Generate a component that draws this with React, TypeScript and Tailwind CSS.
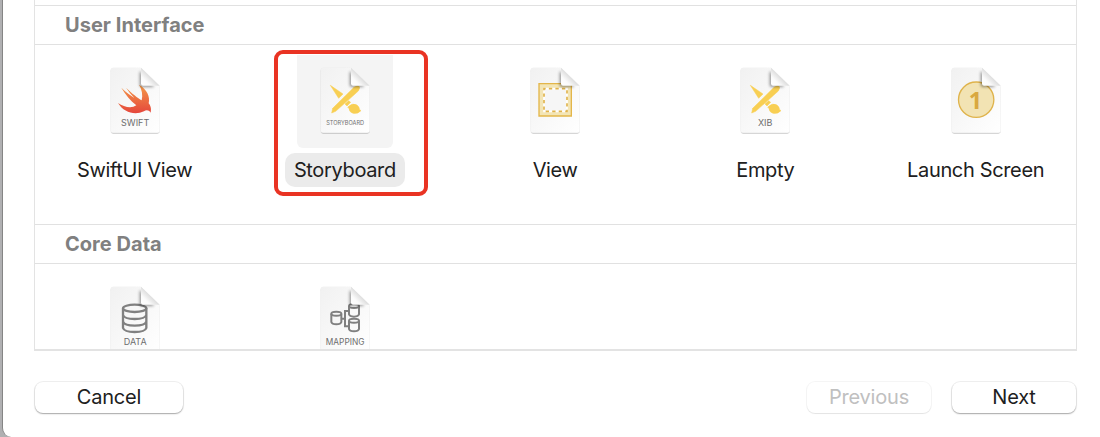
import type { ReactNode } from 'react';

function Doc({ id, label, size = 22, children }: { id: string; label?: string; size?: number; children: ReactNode }) {
  return (
    <svg viewBox="30 15 180 240" className="h-20 w-[60px] shrink-0">
      <defs>
        <linearGradient id={`${id}-page`} x1="0" y1="0" x2="1" y2="1">
          <stop offset="0" stopColor="#f1f1f1" />
          <stop offset="1" stopColor="#ffffff" />
        </linearGradient>
        <linearGradient id={`${id}-fold`} gradientUnits="userSpaceOnUse" x1="138" y1="92" x2="166" y2="64">
          <stop offset="0" stopColor="#ffffff" />
          <stop offset="0.5" stopColor="#fbfbfb" />
          <stop offset="1" stopColor="#dcdcdc" />
        </linearGradient>
        <filter id={`${id}-shadow`} x="-20%" y="-20%" width="140%" height="140%">
          <feDropShadow dx="0" dy="2" stdDeviation="2" floodColor="#000" floodOpacity="0.32" />
        </filter>
        <filter id={`${id}-soft`} x="-50%" y="-50%" width="200%" height="200%">
          <feGaussianBlur stdDeviation="4" />
        </filter>
        <clipPath id={`${id}-clip`}>
          <path d="M55 38H138L194 92V225Q194 233 186 233H55Q47 233 47 225V46Q47 38 55 38Z" />
        </clipPath>
      </defs>
      <path
        d="M55 38H138L194 92V225Q194 233 186 233H55Q47 233 47 225V46Q47 38 55 38Z"
        fill={`url(#${id}-page)`}
        filter={`url(#${id}-shadow)`}
      />
      {children}
      <g clipPath={`url(#${id}-clip)`}>
        <path d="M134 50V90Q134 96 140 96H178L138 50Z" fill="#000" opacity="0.4" filter={`url(#${id}-soft)`} />
      </g>
      <path d="M138 38L194 92H144Q138 92 138 86Z" fill={`url(#${id}-fold)`} />
      {label && (
        <text x="120.5" y={size < 18 ? 211 : 214} textAnchor="middle" fontSize={size} fill="#6e6e6e" fontFamily="Inter, sans-serif">
          {label}
        </text>
      )}
    </svg>
  );
}

function Tools() {
  return (
    <g fill="#f8cf53" stroke="#f8cf53" strokeWidth="1.5" strokeLinejoin="round">
      <path d="M76 91L114 117L101 130Z" />
      <path d="M147 97L156 92Q164 92 164 99L160 108L92 169L80 174L83 160Z" />
      <path d="M120 147L131 137L137 142L126 153Z" />
      <path d="M131 154Q143 143 156 150Q163 155 164 164L168 167Q158 178 144 175Q132 171 132 160L128 157Z" />
    </g>
  );
}

function Cylinder({ x, y }: { x: number; y: number }) {
  return (
    <g fill="none" stroke="#808080" strokeWidth="6">
      <ellipse cx={x} cy={y} rx="15" ry="6" />
      <path d={`M${x - 15} ${y}v25q2 7 15 7t15-7v-25`} />
    </g>
  );
}

function Item({ name, selected = false, children }: { name?: string; selected?: boolean; children: ReactNode }) {
  return (
    <div className="flex w-[210.25px] shrink-0 flex-col items-center pt-[10px]">
      <div className={`flex h-[93px] w-24 justify-center rounded-b-md pt-[5px] ${selected ? 'bg-[#f4f4f4]' : ''}`}>{children}</div>
      {name && (
        <div className={`mt-[5px] flex h-[34px] items-center rounded-[10px] px-[9px] text-[20px] tracking-[-0.35px] whitespace-nowrap text-[#202020] ${selected ? 'bg-[#ebebeb]' : ''}`}>
          {name}
        </div>
      )}
    </div>
  );
}

function Header({ children }: { children: ReactNode }) {
  return (
    <div className="flex h-10 shrink-0 items-center border-y border-[#e1e1e1] pl-[30px] text-[20px] font-bold tracking-[0.03px] text-[#808080]">
      {children}
    </div>
  );
}

function Button({ className, children }: { className: string; children: ReactNode }) {
  return (
    <button className={`flex h-[31px] items-center justify-center rounded-[8px] bg-white pb-0.5 text-[20px] tracking-[-0.2px] ${className}`}>{children}</button>
  );
}

const enabled = 'text-[#202020] shadow-[0_0_0_1px_rgba(0,0,0,0.06),0_1px_1.5px_rgba(0,0,0,0.3)]';

export default function App() {
  return (
    <div className="h-[437px] w-[1100px] overflow-hidden bg-[#b0b0b2] pl-[2px] font-['Inter',sans-serif]">
      <div className="flex h-full flex-col rounded-bl-[9px] border-l border-[#858585] bg-white pr-[23px] pl-[31px]">
        <div className="relative h-[351px] shrink-0">
          <div className="flex h-full flex-col overflow-hidden border-x border-b-2 border-[#e3e3e3] pt-[5px]">
            <Header>User Interface</Header>
            <div className="-ml-[5.5px] flex h-[179px] shrink-0">
              <Item name="SwiftUI View">
                <Doc id="swift" label="SWIFT" size={27}>
                  <defs>
                    <linearGradient id="bird" x1="0" y1="0" x2="0" y2="1">
                      <stop offset="0" stopColor="#f49a48" />
                      <stop offset="1" stopColor="#e5473c" />
                    </linearGradient>
                  </defs>
                  <path fill="url(#bird)" d="M132 89C156 103 166 125 161 145C170 156 168 166 167 173C161 164 153 165 147 169C119 182 86 172 69 144C87 156 109 162 124 151C107 137 91 119 79 98C94 113 109 123 118 129C108 118 99 107 93 98C110 115 129 129 140 136C144 121 141 104 132 89Z" />
                </Doc>
              </Item>
              <Item name="Storyboard" selected>
                <Doc id="story" label="STORYBOARD" size={16.8}><Tools /></Doc>
              </Item>
              <Item name="View">
                <Doc id="view">
                  <path d="M72 86H169V183H72Z" fill="#f3e5b5" stroke="#e3b64a" strokeWidth="4" />
                  <path d="M87 101H156V169H87Z" fill="#f6f6f6" stroke="#fff" strokeWidth="5" />
                  <path d="M87 101H156V169H87Z" fill="none" stroke="#e0b34b" strokeWidth="5" strokeDasharray="10 9.6" strokeDashoffset="5" />
                </Doc>
              </Item>
              <Item name="Empty">
                <Doc id="empty" label="XIB" size={27}><Tools /></Doc>
              </Item>
              <Item name="Launch Screen">
                <Doc id="launch">
                  <circle cx="120.5" cy="134" r="53" fill="#f2e3b3" stroke="#dfb34b" strokeWidth="4" />
                  <text x="118" y="162" textAnchor="middle" fontSize="70" fontWeight="700" fill="#d9a83f" fontFamily="'Open Sans', sans-serif">1</text>
                </Doc>
              </Item>
            </div>
            <Header>Core Data</Header>
            <div className="-ml-[5.5px] flex">
              <Item>
                <Doc id="data" label="DATA" size={27}>
                  <g fill="none" stroke="#808080" strokeWidth="7">
                    <ellipse cx="119" cy="103" rx="35" ry="11" />
                    <path d="M84 103V162Q88 174 119 174T154 162V103M84 123Q88 135 119 135T154 123M84 143Q88 155 119 155T154 143" />
                  </g>
                </Doc>
              </Item>
              <Item>
                <Doc id="mapping" label="MAPPING" size={25}>
                  <path d="M110 134H120M132 111H120V157H132" fill="none" stroke="#808080" strokeWidth="6" />
                  <Cylinder x={94} y={119} />
                  <Cylinder x={147} y={96} />
                  <Cylinder x={147} y={140} />
                </Doc>
              </Item>
            </div>
          </div>
          <div className="absolute top-[50px] left-[240px] h-[146px] w-[154px] rounded-[9px] border-4 border-[#e93323]" />
        </div>
        <div className="mt-[31px] flex pl-px">
          <Button className={`w-[148px] ${enabled}`}>Cancel</Button>
          <Button className="ml-auto w-[124px] text-[#c0c0c0] shadow-[0_0_0_1px_rgba(0,0,0,0.04),0_1px_1px_rgba(0,0,0,0.07)]">Previous</Button>
          <Button className={`mr-px ml-[21px] w-[124px] ${enabled}`}>Next</Button>
        </div>
      </div>
    </div>
  );
}
